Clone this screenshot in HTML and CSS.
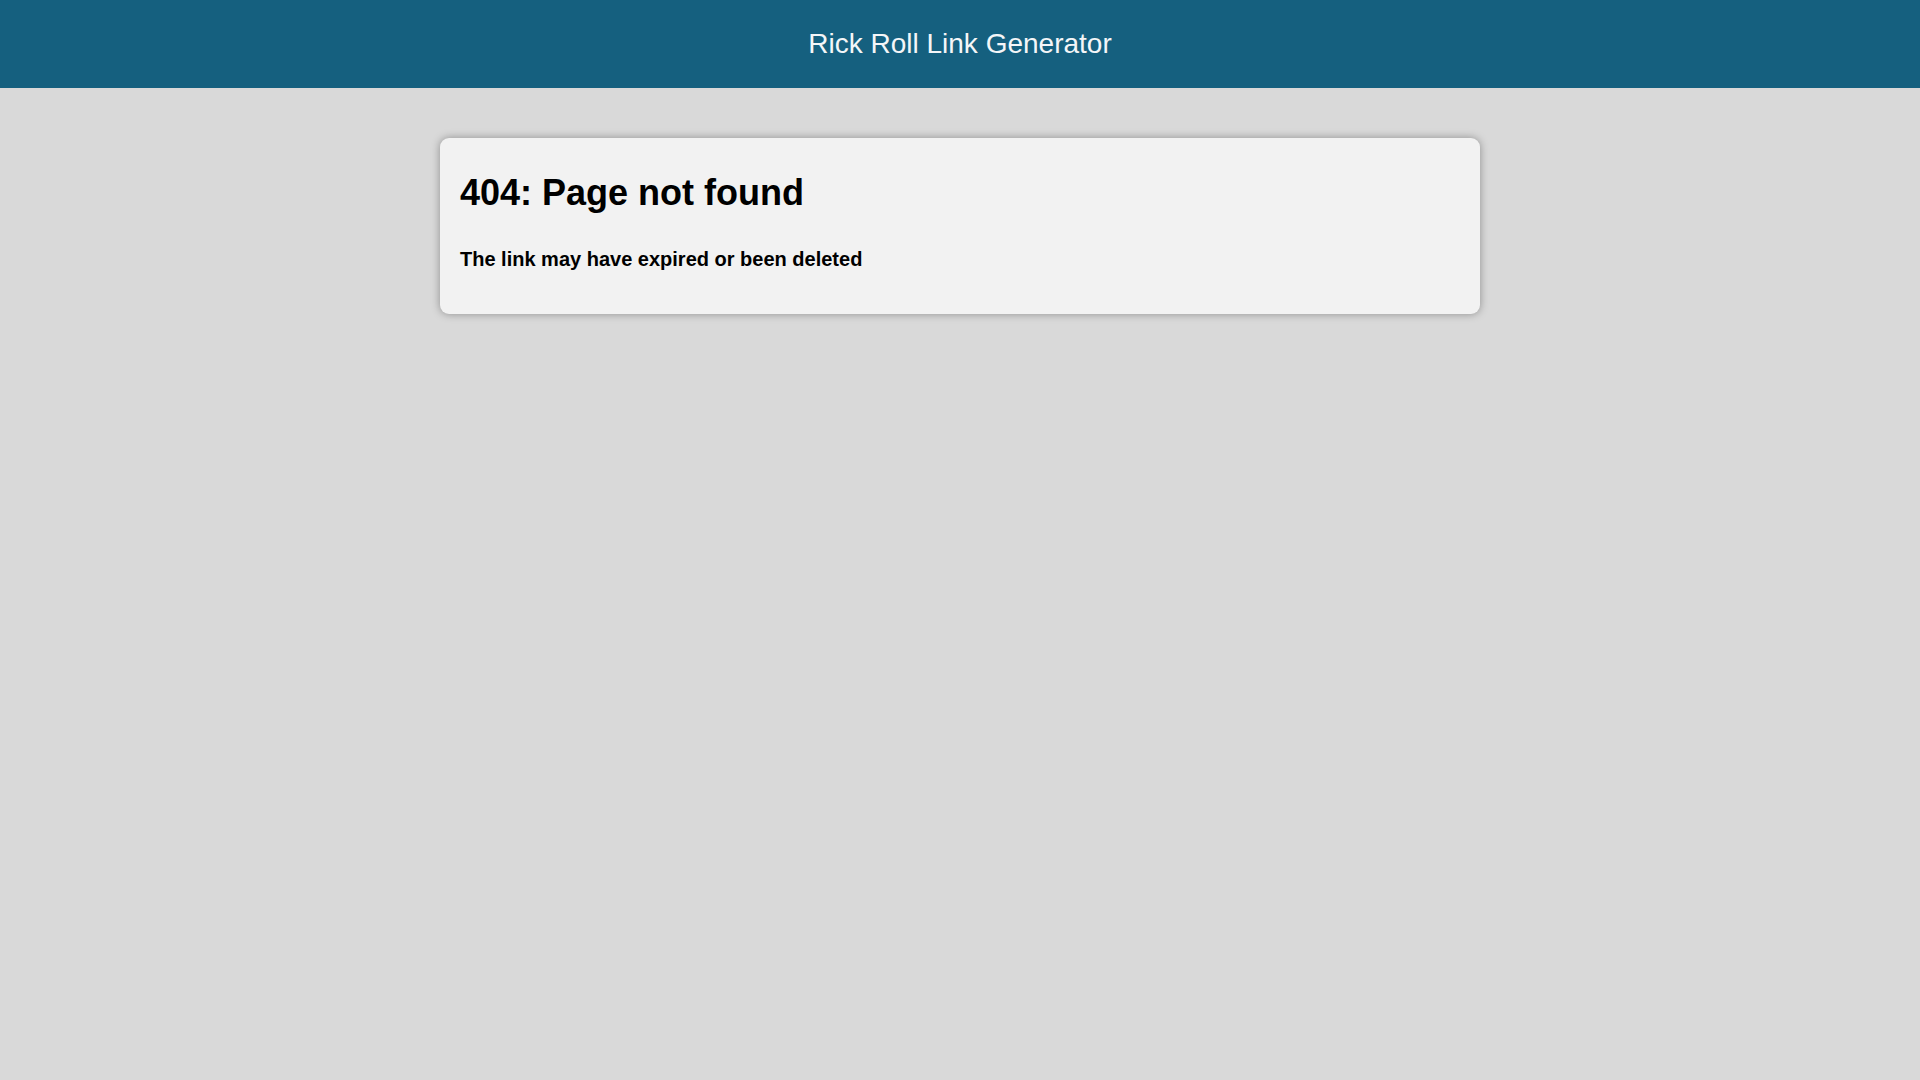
FILE: index.html
```html
<!DOCTYPE html>
<html lang="en">
<head>
<meta charset="utf-8">
<title>Rick Roll Link Generator</title>
<link rel="stylesheet" href="styles.css">
</head>
<body>
<header class="topbar">
  <span class="brand">Rick Roll Link Generator</span>
</header>
<main class="content">
  <section class="card">
    <h1 class="card-title">404: Page not found</h1>
    <p class="card-text">The link may have expired or been deleted</p>
  </section>
</main>
</body>
</html>
```
FILE: styles.css
```css
html, body {
  margin: 0;
  padding: 0;
}
body {
  background: #d9d9d9;
  font-family: "Liberation Sans", Arial, sans-serif;
  min-height: 100vh;
}
.topbar {
  height: 88px;
  background: #15607f;
  display: flex;
  align-items: center;
  justify-content: center;
}
.brand {
  color: #f4f6f8;
  font-size: 28px;
  line-height: normal;
}
.content {
  display: flex;
  justify-content: center;
  padding-top: 50px;
}
.card {
  width: 1040px;
  box-sizing: border-box;
  background: #f2f2f2;
  border-radius: 9px;
  box-shadow: 0 0 8px rgba(0, 0, 0, 0.35);
  padding: 20px;
}
.card-title {
  margin: 14px 0 34px;
  font-size: 36px;
  font-weight: bold;
  line-height: normal;
  color: #000;
}
.card-text {
  margin: 0 0 23px;
  font-size: 20px;
  font-weight: bold;
  line-height: normal;
  color: #000;
}
```
